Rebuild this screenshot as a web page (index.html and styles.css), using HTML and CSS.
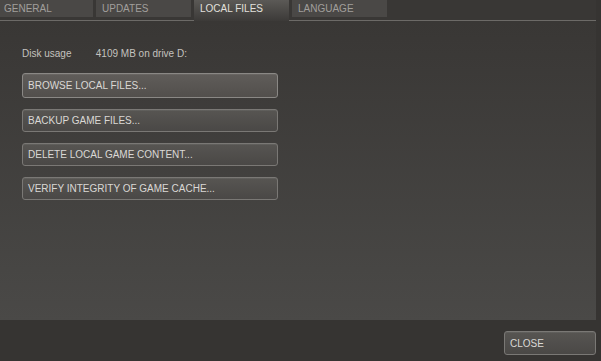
FILE: index.html
```html
<!DOCTYPE html>
<html lang="en">
<head>
    <meta charset="UTF-8">
    <title>Properties - Local Files</title>
    <link rel="stylesheet" href="styles.css">
</head>
<body>
    <div class="dialog">
        <nav class="tabs">
            <a class="tab">GENERAL</a>
            <a class="tab">UPDATES</a>
            <a class="tab active">LOCAL FILES</a>
            <a class="tab">LANGUAGE</a>
        </nav>

        <section class="panel">
            <div class="disk-usage">
                <span class="label">Disk usage</span>
                <span class="value">4109 MB on drive D:</span>
            </div>
            <div class="actions">
                <button class="btn focused">BROWSE LOCAL FILES...</button>
                <button class="btn">BACKUP GAME FILES...</button>
                <button class="btn">DELETE LOCAL GAME CONTENT...</button>
                <button class="btn">VERIFY INTEGRITY OF GAME CACHE...</button>
            </div>
        </section>

        <footer class="footer">
            <button class="btn close-btn">CLOSE</button>
        </footer>
    </div>
</body>
</html>
```

FILE: styles.css
```css
/* Steam style game properties dialog */
body {
    margin: 0;
    padding: 0;
    background-color: #363432;
    font-family: "Liberation Sans", Arial, sans-serif;
    font-size: 10px;
}

.dialog {
    width: 601px;
    height: 361px;
    display: flex;
    flex-direction: column;
}

.tabs {
    display: flex;
    height: 20px;
    width: 596px;
    border-bottom: 1px solid #6c6a67;
    background-color: #393735;
}

.tab {
    width: 95px;
    height: 17px;
    margin-right: 3px;
    padding-left: 6px;
    box-sizing: border-box;
    line-height: 17px;
    color: #a19f9c;
    background-color: #4a4846;
}

.tab:first-child {
    margin-left: -2px;
}

.tab.active {
    height: 21px;
    color: #e2e0dd;
    background: linear-gradient(#5b5956, #3c3a38);
    position: relative;
    z-index: 1;
}

.panel {
    flex: 1;
    width: 596px;
    padding: 26px 0 0 22px;
    box-sizing: border-box;
    background: linear-gradient(#393735, #4a4947);
}

.disk-usage {
    height: 14px;
    line-height: 14px;
    color: #c4c2bf;
}

.disk-usage .label {
    display: inline-block;
    width: 71px;
}

.actions {
    display: flex;
    flex-direction: column;
    gap: 11px;
    margin-top: 12px;
}

.btn {
    width: 256px;
    height: 23px;
    padding: 0 0 0 5px;
    text-align: left;
    font-family: "Liberation Sans", Arial, sans-serif;
    font-size: 10px;
    color: #dad8d5;
    border: 1px solid #7a7875;
    border-radius: 3px;
    background: linear-gradient(#575552, #4a4846);
    box-shadow: inset 0 1px 0 rgba(255, 255, 255, 0.06);
}

.btn.focused {
    height: 25px;
    border-color: #8a8885;
    background: linear-gradient(#605d5a, #524f4c);
}

.footer {
    height: 41px;
    display: flex;
    justify-content: flex-end;
    align-items: flex-start;
    padding: 11px 5px 0 0;
    box-sizing: border-box;
    background-color: #363432;
}

.close-btn {
    width: 92px;
    height: 24px;
}
```
